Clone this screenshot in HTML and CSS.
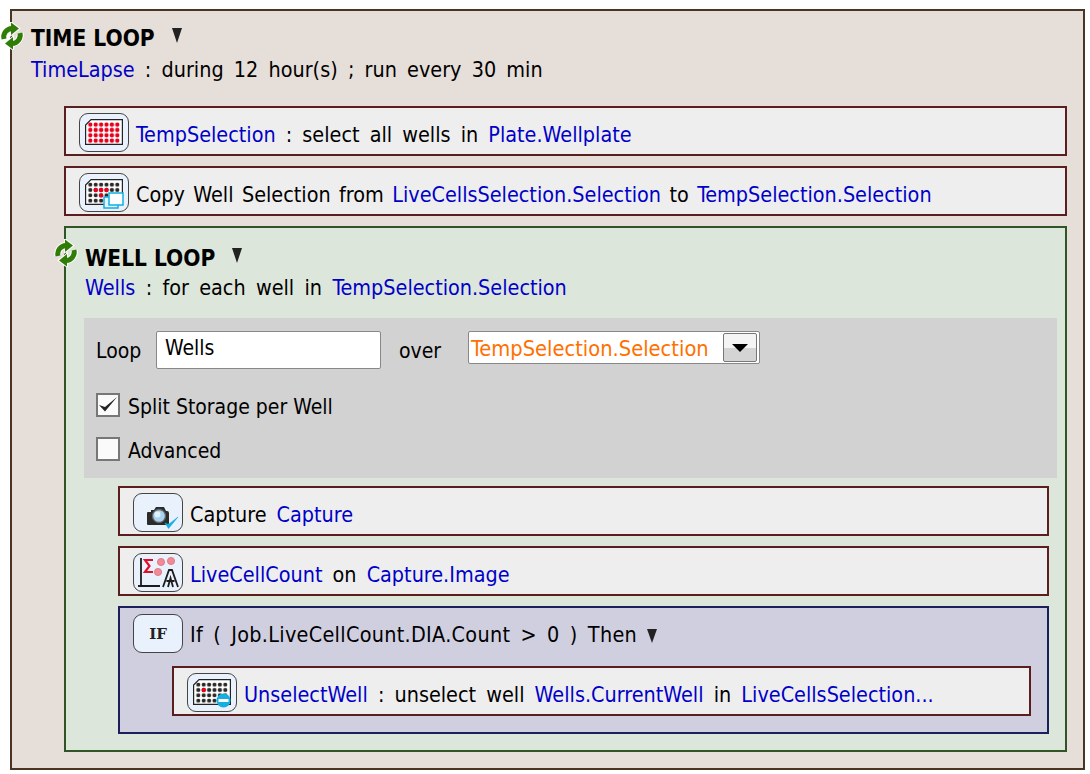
FILE: index.html
```html
<!DOCTYPE html>
<html lang="en">
<head>
    <meta charset="UTF-8">
    <meta name="viewport" content="width=device-width, initial-scale=1.0">
    <title>Time Loop Protocol</title>
    <link rel="stylesheet" href="styles.css">
</head>
<body>
    <!-- shared icon parts -->
    <svg class="defs" width="0" height="0" aria-hidden="true">
        <defs>
            <pattern id="dotsRed" x="2.600" y="3" width="5.400" height="5.330" patternUnits="userSpaceOnUse">
                <circle cx="2.700" cy="2.660" r="2.200" fill="#e8001c"/>
            </pattern>
            <pattern id="dotsBlack" x="2.600" y="3" width="5.400" height="5.330" patternUnits="userSpaceOnUse">
                <circle cx="2.700" cy="2.660" r="2.100" fill="#2a2a2a"/>
            </pattern>
            <symbol id="loopArrows" viewBox="0 0 24 28">
                <g fill="#fff" stroke="#fff">
                    <path d="M4 17A8.500 8.500 0 0 1 12 6.500" fill="none" stroke-width="7"/>
                    <path d="M20 11A8.500 8.500 0 0 1 12 21.500" fill="none" stroke-width="7"/>
                    <path d="M11 .5L19 6.500 11 13z" stroke-width="2"/>
                    <path d="M13 27.500L5 21.500 13 15z" stroke-width="2"/>
                </g>
                <g fill="#2f7d06" stroke="#2f7d06">
                    <path d="M4 17A8.500 8.500 0 0 1 12 6.500" fill="none" stroke-width="5"/>
                    <path d="M20 11A8.500 8.500 0 0 1 12 21.500" fill="none" stroke-width="5"/>
                    <path d="M11 .5L19 6.500 11 13z" stroke="none"/>
                    <path d="M13 27.500L5 21.500 13 15z" stroke="none"/>
                </g>
            </symbol>
            <symbol id="plate" viewBox="0 0 38 26">
                <path d="M6 .6H37.400V25.400H.6V6z" fill="#fff" stroke="#222" stroke-width="1.200"/>
            </symbol>
        </defs>
    </svg>

    <div class="block time-loop">
        <svg class="loop-icon"><use href="#loopArrows"/></svg>
        <div class="loop-title">TIME LOOP <span class="arrow"></span></div>
        <div class="loop-sub"><span class="ref">TimeLapse</span> : during 12 hour(s) ; run every 30 min</div>

        <div class="block step">
            <div class="icon">
                <svg width="38" height="26" viewBox="0 0 38 26">
                    <use href="#plate" width="38" height="26"/>
                    <rect x="2.600" y="3" width="32.400" height="21.320" fill="url(#dotsRed)"/>
                </svg>
            </div>
            <div class="step-text"><span class="ref">TempSelection</span> : select all wells in <span class="ref">Plate.Wellplate</span></div>
        </div>

        <div class="block step">
            <div class="icon">
                <svg width="38" height="26" viewBox="0 0 38 26">
                    <use href="#plate" width="38" height="26"/>
                    <rect x="2.600" y="3" width="32.400" height="21.320" fill="url(#dotsBlack)"/>
                    <circle cx="10.700" cy="11" r="2.200" fill="#e8001c"/>
                    <circle cx="16.100" cy="11" r="2.200" fill="#e8001c"/>
                    <circle cx="21.500" cy="11" r="2.200" fill="#e8001c"/>
                    <circle cx="16.100" cy="16.400" r="2.200" fill="#e8001c"/>
                </svg>
                <svg class="badge copy-badge" width="21" height="17" viewBox="0 0 21 17">
                    <rect x="1" y="5" width="14" height="11" fill="#dff4fb" stroke="#14aee0" stroke-width="1.500"/>
                    <rect x="6" y="1" width="14" height="12" fill="#fff" stroke="#14aee0" stroke-width="1.500"/>
                </svg>
            </div>
            <div class="step-text tight">Copy Well Selection from <span class="ref">LiveCellsSelection.Selection</span> to <span class="ref">TempSelection.Selection</span></div>
        </div>

        <div class="block well-loop">
            <svg class="loop-icon"><use href="#loopArrows"/></svg>
            <div class="loop-title">WELL LOOP <span class="arrow"></span></div>
            <div class="loop-sub"><span class="ref">Wells</span> : for each well in <span class="ref">TempSelection.Selection</span></div>

            <div class="settings">
                <div class="settings-row">
                    <label class="loop-label" for="loopName">Loop</label>
                    <input class="name-input" id="loopName" type="text" value="Wells">
                    <span class="over-label">over</span>
                    <div class="combo">
                        <span class="combo-value">TempSelection.Selection</span>
                        <span class="combo-btn"><span class="combo-caret"></span></span>
                    </div>
                </div>
                <div class="check-row">
                    <span class="checkbox">
                        <svg width="20" height="20" viewBox="0 0 20 20"><path d="M1 10l6 6.500L19 2 7 12z" fill="#222"/></svg>
                    </span>
                    <span class="check-label">Split Storage per Well</span>
                </div>
                <div class="check-row">
                    <span class="checkbox"></span>
                    <span class="check-label">Advanced</span>
                </div>
            </div>

            <div class="nested">
                <div class="block step">
                    <div class="icon">
                        <svg width="48" height="37" viewBox="0 0 48 37">
                            <path d="M14 18h3v-2h3l2-3h8l2 4h1a2 2 0 0 1 2 2v10a2 2 0 0 1-2 2H14a1 1 0 0 1-1-1V19a1 1 0 0 1 1-1z" fill="#2b2b2b"/>
                            <circle cx="25" cy="22" r="6.500" fill="#a9d2f2" stroke="#666" stroke-width="1.300"/>
                            <circle cx="23.500" cy="20.500" r="3" fill="#e2f2fd"/>
                            <path d="M31 29l3.500 5.500L44 23l-9.500 7.500z" fill="#14aee0" stroke="#14aee0" stroke-width=".6"/>
                        </svg>
                    </div>
                    <div class="step-text">Capture <span class="ref">Capture</span></div>
                </div>

                <div class="block step">
                    <div class="icon">
                        <svg width="48" height="37" viewBox="0 0 48 37">
                            <path d="M7 4v29M4 32h22" fill="none" stroke="#1c1c1c" stroke-width="1.800"/>
                            <path d="M19 6H11l4.500 6L11 18h8" fill="none" stroke="#e0102c" stroke-width="2.200"/>
                            <circle cx="27" cy="8" r="3.600" fill="#f08a96" stroke="#e0707e" stroke-width=".8"/>
                            <circle cx="37" cy="7" r="3.600" fill="#f08a96" stroke="#e0707e" stroke-width=".8"/>
                            <circle cx="24" cy="18" r="3.600" fill="#f08a96" stroke="#e0707e" stroke-width=".8"/>
                            <path d="M29 33l6-17h3l6 17M32.500 27h8M34 33l2.500-9 2.500 9" fill="none" stroke="#1c1c1c" stroke-width="1.800"/>
                        </svg>
                    </div>
                    <div class="step-text"><span class="ref">LiveCellCount</span> on <span class="ref">Capture.Image</span></div>
                </div>

                <div class="block if-block">
                    <div class="if-head">
                        <div class="icon"><span class="if-glyph">IF</span></div>
                        <div class="step-text if-text">If ( Job.LiveCellCount.DIA.Count &gt; 0 ) Then <span class="arrow small"></span></div>
                    </div>
                    <div class="block step">
                        <div class="icon">
                            <svg width="38" height="26" viewBox="0 0 38 26">
                                <use href="#plate" width="38" height="26"/>
                                <rect x="2.600" y="3" width="32.400" height="21.320" fill="url(#dotsBlack)"/>
                                <circle cx="10.700" cy="11" r="2.200" fill="#e8001c"/>
                            </svg>
                            <svg class="badge minus-badge" width="15" height="15" viewBox="0 0 15 15">
                                <circle cx="7.500" cy="7.500" r="7" fill="#14aee0"/>
                                <rect x="2.500" y="6" width="10" height="3" fill="#fff"/>
                            </svg>
                        </div>
                        <div class="step-text"><span class="ref">UnselectWell</span> : unselect well <span class="ref">Wells.CurrentWell</span> in <span class="ref">LiveCellsSelection...</span></div>
                    </div>
                </div>
            </div>
        </div>
    </div>
</body>
</html>
```

FILE: styles.css
```css
body {
    margin: 0;
    padding: 9px 5px 4px 10px;
    background-color: #fff;
    font-family: "DejaVu Sans Condensed", "DejaVu Sans", sans-serif;
    font-stretch: condensed;
    font-size: 21.4px;
    color: #000;
}

.defs {
    display: block;
}

.block {
    position: relative;
    box-sizing: border-box;
    border: 2px solid;
}

.ref {
    color: #0000c8;
}

.time-loop {
    height: 761px;
    padding: 0 16px 0 52px;
    background-color: #e6ded8;
    border-color: #4a3524;
}

.well-loop {
    height: 526px;
    margin-top: 10px;
    padding: 0 8px 0 18px;
    background-color: #dde6da;
    border-color: #2f5526;
}

.loop-icon {
    position: absolute;
    left: -12px;
    top: 11px;
    width: 24px;
    height: 28px;
}

.loop-title {
    height: 33px;
    margin-left: -33px;
    padding-top: 11px;
    font-weight: bold;
    font-size: 22.5px;
    line-height: 32px;
}

.well-loop .loop-title {
    height: 31px;
    margin-left: 1px;
    padding-top: 14px;
}

.loop-sub {
    height: 30px;
    margin-left: -33px;
    margin-bottom: 21px;
    line-height: 30px;
    word-spacing: 4.1px;
}

.well-loop .loop-sub {
    margin-left: 1px;
    margin-bottom: 15px;
    word-spacing: 4.2px;
}

.arrow {
    display: inline-block;
    width: 0;
    height: 0;
    margin-left: 10px;
    vertical-align: 3px;
    border-left: 5px solid transparent;
    border-right: 5px solid transparent;
    border-top: 15px solid #222;
}

.arrow.small {
    margin-left: 0;
    vertical-align: -1px;
    border-top-width: 14px;
}

.step {
    display: flex;
    align-items: center;
    height: 50px;
    margin-bottom: 10px;
    padding-left: 13px;
    background-color: #eeeeef;
    border-color: #5a1e1e;
}

.step-text {
    margin-left: 7px;
    padding-top: 6px;
    white-space: nowrap;
    word-spacing: 4px;
}

.step-text.tight {
    word-spacing: 2.3px;
}

.step-text.if-text {
    padding-top: 4px;
    letter-spacing: .3px;
    word-spacing: 3.8px;
}

.icon {
    position: relative;
    display: flex;
    align-items: center;
    justify-content: center;
    flex: none;
    box-sizing: border-box;
    width: 50px;
    height: 39px;
    margin-top: 2px;
    background-color: #e9f1fd;
    border: 1px solid #444;
    border-radius: 9px;
}

.badge {
    position: absolute;
}

.copy-badge {
    right: 4px;
    bottom: 2px;
}

.minus-badge {
    right: 5px;
    bottom: 3px;
}

.if-glyph {
    font-family: "DejaVu Serif", serif;
    font-stretch: normal;
    font-weight: bold;
    font-size: 15px;
    color: #222;
}

.settings {
    height: 160px;
    box-sizing: border-box;
    padding: 13px 12px 0;
    background-color: #d2d2d2;
}

.settings-row {
    display: flex;
    align-items: flex-start;
    height: 38px;
    margin-bottom: 24px;
    font-size: 21px;
}

.loop-label {
    width: 60px;
    line-height: 41px;
}

.name-input {
    width: 225px;
    height: 38px;
    box-sizing: border-box;
    padding: 0 8px 5px;
    background-color: #fff;
    border: 1px solid #888;
    border-radius: 2px;
    font: inherit;
    color: #000;
}

.over-label {
    width: 69px;
    margin-left: 18px;
    line-height: 41px;
}

.combo {
    display: flex;
    align-items: center;
    justify-content: space-between;
    box-sizing: border-box;
    width: 292px;
    height: 33px;
    padding-left: 2px;
    padding-right: 2px;
    background-color: #fff;
    border: 1px solid #888;
    border-radius: 2px;
    color: #ff7000;
}

.combo-value {
    padding-top: 2px;
    font-size: 21.7px;
}

.combo-btn {
    display: flex;
    align-items: center;
    justify-content: center;
    box-sizing: border-box;
    width: 34px;
    height: 29px;
    background: linear-gradient(#f4f4f4 50%, #d4d4d4 50%);
    border: 1px solid #777;
    border-radius: 2px;
}

.combo-caret {
    width: 0;
    height: 0;
    border-left: 8px solid transparent;
    border-right: 8px solid transparent;
    border-top: 8px solid #000;
}

.check-row {
    display: flex;
    align-items: center;
    height: 24px;
    margin-bottom: 20px;
    font-size: 21px;
}

.check-label {
    padding-top: 3px;
}

.checkbox {
    display: flex;
    box-sizing: border-box;
    width: 24px;
    height: 24px;
    margin-right: 8px;
    background-color: #fafafa;
    border: 2px solid #777;
}

.nested {
    margin: 8px 8px 0 34px;
}

.if-block {
    height: 128px;
    padding: 5px 16px 0 13px;
    background-color: #d0cfe0;
    border-color: #1c1f5c;
}

.if-head {
    display: flex;
    align-items: center;
    height: 39px;
    margin-bottom: 14px;
}

.if-block .step {
    margin: 0 0 0 39px;
}
```
